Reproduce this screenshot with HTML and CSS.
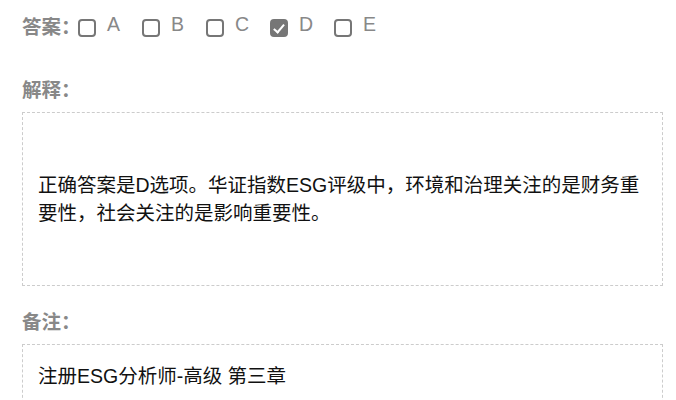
FILE: index.html
```html
<!DOCTYPE html>
<html lang="zh-CN">
  <head>
    <meta charset="UTF-8" />
    <meta name="viewport" content="width=device-width, initial-scale=1.0" />
    <title>题目详情</title>
    <link rel="stylesheet" href="styles.css">
  </head>
  <body>
    <div class="question">
      <div class="answer-row">
        <span class="label answer-label">答案：</span>
        <label class="option"><input type="checkbox" /><span>A</span></label>
        <label class="option"><input type="checkbox" /><span>B</span></label>
        <label class="option"><input type="checkbox" /><span>C</span></label>
        <label class="option"><input type="checkbox" checked /><span>D</span></label>
        <label class="option"><input type="checkbox" /><span>E</span></label>
      </div>

      <div class="section">
        <div class="label">解释：</div>
        <div class="box explain">
          <p>正确答案是D选项。华证指数ESG评级中，环境和治理关注的是财务重要性，社会关注的是影响重要性。</p>
        </div>
      </div>

      <div class="section">
        <div class="label">备注：</div>
        <div class="box note">
          <p>注册ESG分析师-高级 第三章</p>
        </div>
      </div>
    </div>
  </body>
</html>
```

FILE: styles.css
```css
* {
  box-sizing: border-box;
}
body {
  margin: 0;
  background: #fff;
  font-family: "Liberation Sans", "Noto Sans CJK SC", sans-serif;
  font-size: 19.5px;
  line-height: 28px;
  color: #111;
}
.question {
  padding: 13px 13px 0 22px;
}

.label {
  color: #888;
  font-weight: bold;
}

.answer-row {
  display: flex;
  align-items: center;
  height: 28px;
}
.answer-label {
  width: 56px;
  white-space: nowrap;
}

.option {
  display: flex;
  align-items: center;
  width: 64px;
  color: #888;
}
.option input {
  appearance: none;
  position: relative;
  flex: none;
  width: 18px;
  height: 18px;
  margin: 2px 11px 0 0;
  border: 2px solid #767676;
  border-radius: 4px;
  background: #fff;
}
.option input:checked {
  background: #767676;
}
.option input:checked::after {
  content: "";
  position: absolute;
  left: 4px;
  top: 0.5px;
  width: 4px;
  height: 9px;
  border-right: 2.5px solid #fff;
  border-bottom: 2.5px solid #fff;
  transform: rotate(40deg);
}
.option span {
  margin-top: -6px;
}

.section {
  margin-top: 35px;
}
.section + .section {
  margin-top: 22px;
}
.section .label {
  margin-bottom: 8px;
}

.box {
  border: 1px dashed #ccc;
}
.box p {
  margin: 0;
}
.explain {
  display: flex;
  align-items: center;
  height: 174px;
  padding: 0 8px 0 15px;
}
.note {
  padding: 17px 15px;
}
```
